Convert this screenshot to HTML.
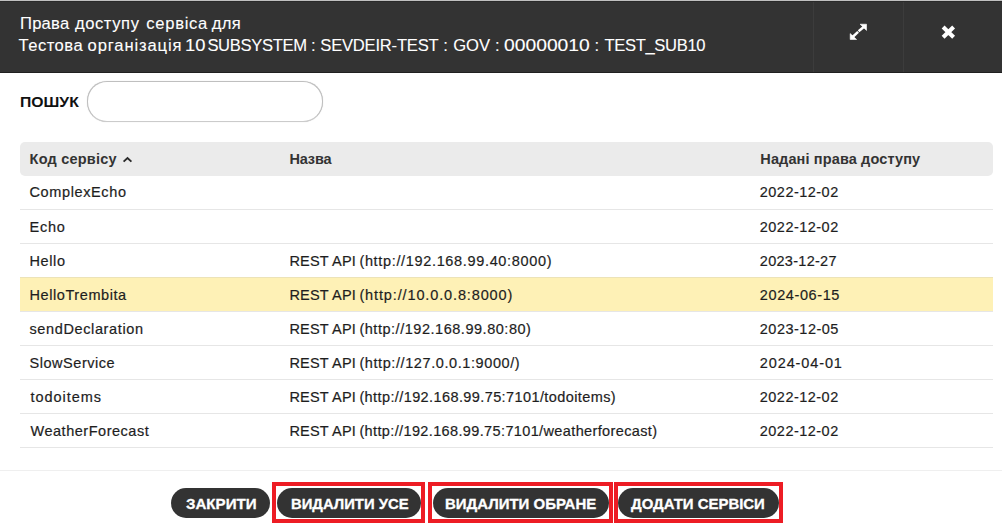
<!DOCTYPE html>
<html><head><meta charset="utf-8">
<style>
*{margin:0;padding:0;box-sizing:border-box}
html,body{width:1002px;height:526px;overflow:hidden;background:#fff}
body{position:relative;font-family:"Liberation Sans",sans-serif;color:#222}
.a{position:absolute;white-space:nowrap}
#topline{left:0;top:0;width:1002px;height:1px;background:#c0c0c0}
#hdr{left:0;top:1px;width:1002px;height:72px;background:#333;border-top:1px solid #2a2a2a;border-bottom:1px solid #202020}
.vd{top:2px;width:1px;height:70px;background:#3c3c3c}
.t1{color:#fff;font-size:16.6px;letter-spacing:0.4px;line-height:20px;-webkit-text-stroke:0.1px #fff}
.lbl{font-weight:bold;font-size:14.5px;color:#111;line-height:20px}
#search{left:87px;top:81px;width:236px;height:41px;border:1px solid #bfbfbf;border-bottom-color:#cbcbcb;box-shadow:0 0 0.8px rgba(0,0,0,0.25);border-radius:20px;background:#fff}
#th{left:20px;top:142px;width:973px;height:34px;background:#ebebeb;border-radius:5px}
.th{font-weight:bold;font-size:14.5px;color:#333;line-height:20px}
.row{left:20px;width:973px;height:34px;border-bottom:1px solid #e6e6e6}
.td{font-size:14.5px;color:#1e1e1e;line-height:20px;-webkit-text-stroke:0.2px #1e1e1e}
#foot{left:0;top:470px;width:1002px;height:1px;background:#efefef}
.btn{top:487.5px;height:30px;border-radius:15px;background:#333}
.bt{font-weight:bold;font-size:14px;color:#fff;line-height:20px;-webkit-text-stroke:0.3px #fff}
.red{top:482px;height:41px;border:4px solid #ed1c24}
</style></head><body>
<div class="a" id="topline"></div>
<div class="a" id="hdr"></div>
<div class="a vd" style="left:813px"></div>
<div class="a vd" style="left:903px"></div>
<div class="a t1" style="left:20px;top:14px;letter-spacing:0.23px">Права</div>
<div class="a t1" style="left:74.9px;top:14px;letter-spacing:0.58px">доступу</div>
<div class="a t1" style="left:146.2px;top:14px;letter-spacing:0.73px">сервіса</div>
<div class="a t1" style="left:211.8px;top:14px;letter-spacing:0.3px">для</div>
<div class="a t1" style="left:18.6px;top:36px;letter-spacing:0.47px">Тестова</div>
<div class="a t1" style="left:87.6px;top:36px;letter-spacing:0.87px">організація</div>
<div class="a t1" style="left:185.2px;top:36px;letter-spacing:0;transform:scaleX(1.106);transform-origin:0 0">10</div>
<div class="a t1" style="left:207.4px;top:36px;letter-spacing:-0.34px">SUBSYSTEM</div>
<div class="a t1" style="left:311px;top:36px;letter-spacing:0px">:</div>
<div class="a t1" style="left:320.3px;top:36px;letter-spacing:-0.22px">SEVDEIR-TEST</div>
<div class="a t1" style="left:443.3px;top:36px;letter-spacing:0px">:</div>
<div class="a t1" style="left:453.2px;top:36px;letter-spacing:-0.05px">GOV</div>
<div class="a t1" style="left:495.1px;top:36px;letter-spacing:0px">:</div>
<div class="a t1" style="left:504.4px;top:36px;letter-spacing:0;transform:scaleX(1.162);transform-origin:0 0">00000010</div>
<div class="a t1" style="left:594.5px;top:36px;letter-spacing:0px">:</div>
<div class="a t1" style="left:604.5px;top:36px;letter-spacing:-0.36px">TEST_SUB10</div>
<!-- expand icon -->
<svg class="a" style="left:846px;top:20px" width="25" height="24" viewBox="846 20 25 24">
  <polygon fill="#fff" stroke="#fff" stroke-width="0.6" stroke-linejoin="round" points="860.1,24.2 866.5,24.2 866.5,30.4"/>
  <polygon fill="#fff" stroke="#fff" stroke-width="0.6" stroke-linejoin="round" points="850.2,33.6 850.2,39.5 856.6,39.5"/>
  <line x1="864" y1="26.8" x2="858.6" y2="31.2" stroke="#fff" stroke-width="2.5"/>
  <line x1="858.1" y1="31.8" x2="852.6" y2="37" stroke="#fff" stroke-width="2.5"/>
</svg>
<!-- close icon -->
<svg class="a" style="left:938px;top:22px" width="22" height="20" viewBox="938 22 22 20">
  <path d="M943.1 27.1 L953.6 37.2 M953.6 27.1 L943.1 37.2" stroke="#fff" stroke-width="4.1" stroke-linecap="butt"/>
</svg>

<div class="a lbl" style="left:19.72px;top:92px;transform:scaleX(1.085);transform-origin:0 0">ПОШУК</div>
<div class="a" id="search"></div>

<div class="a" id="th"></div>
<div class="a th" style="left:29.6px;top:149px;letter-spacing:0.21px">Код сервісу</div>
<svg class="a" style="left:122px;top:156px" width="11" height="7" viewBox="0 0 11 7"><path d="M1.6 5.6 L5.5 2.0 L9.4 5.6" fill="none" stroke="#2a2a2a" stroke-width="1.9"/></svg>
<div class="a th" style="left:289.4px;top:149px;letter-spacing:-0.12px">Назва</div>
<div class="a th" style="left:760.3px;top:149px;letter-spacing:0.13px">Надані права доступу</div>

<div class="a row" style="top:176px"></div>
<div class="a row" style="top:210px"></div>
<div class="a row" style="top:244px"></div>
<div class="a row" style="top:277px;height:35px;background:#fef1b6;border-top:1px solid #ece3b8"></div>
<div class="a row" style="top:312px"></div>
<div class="a row" style="top:346px"></div>
<div class="a row" style="top:380px"></div>
<div class="a row" style="top:414px"></div>

<div class="a td" style="left:29.5px;top:182px;letter-spacing:0.62px">ComplexEcho</div>
<div class="a td" style="left:759.8px;top:182px;letter-spacing:0.47px">2022-12-02</div>
<div class="a td" style="left:29.5px;top:217px;letter-spacing:0.73px">Echo</div>
<div class="a td" style="left:759.8px;top:217px;letter-spacing:0.47px">2022-12-02</div>
<div class="a td" style="left:29.5px;top:251px;letter-spacing:0.62px">Hello</div>
<div class="a td" style="left:289.4px;top:251px;letter-spacing:0.21px">REST API</div><div class="a td" style="left:359.4px;top:251px;letter-spacing:0.66px">(http://192.168.99.40:8000)</div>
<div class="a td" style="left:759.8px;top:251px;letter-spacing:0.28px">2023-12-27</div>
<div class="a td" style="left:29.5px;top:285px;letter-spacing:0.58px">HelloTrembita</div>
<div class="a td" style="left:289.4px;top:285px;letter-spacing:0.21px">REST API</div><div class="a td" style="left:359.4px;top:285px;letter-spacing:0.87px">(http://10.0.0.8:8000)</div>
<div class="a td" style="left:759.8px;top:285px;letter-spacing:0.6px">2024-06-15</div>
<div class="a td" style="left:29.5px;top:319px;letter-spacing:0.62px">sendDeclaration</div>
<div class="a td" style="left:289.4px;top:319px;letter-spacing:0.21px">REST API</div><div class="a td" style="left:359.4px;top:319px;letter-spacing:0.53px">(http://192.168.99.80:80)</div>
<div class="a td" style="left:759.8px;top:319px;letter-spacing:0.49px">2023-12-05</div>
<div class="a td" style="left:29.5px;top:353px;letter-spacing:0.54px">SlowService</div>
<div class="a td" style="left:289.4px;top:353px;letter-spacing:0.21px">REST API</div><div class="a td" style="left:359.4px;top:353px;letter-spacing:0.59px">(http://127.0.0.1:9000/)</div>
<div class="a td" style="left:759.8px;top:353px;letter-spacing:0.88px">2024-04-01</div>
<div class="a td" style="left:30.5px;top:387px;letter-spacing:0.96px">todoitems</div>
<div class="a td" style="left:289.4px;top:387px;letter-spacing:0.21px">REST API</div><div class="a td" style="left:359.4px;top:387px;letter-spacing:0.4px">(http://192.168.99.75:7101/todoitems)</div>
<div class="a td" style="left:759.8px;top:387px;letter-spacing:0.47px">2022-12-02</div>
<div class="a td" style="left:30.5px;top:421px;letter-spacing:0.52px">WeatherForecast</div>
<div class="a td" style="left:289.4px;top:421px;letter-spacing:0.21px">REST API</div><div class="a td" style="left:359.4px;top:421px;letter-spacing:0.37px">(http://192.168.99.75:7101/weatherforecast)</div>
<div class="a td" style="left:759.8px;top:421px;letter-spacing:0.47px">2022-12-02</div>

<div class="a" id="foot"></div>

<div class="a btn" style="left:171px;width:99px"></div>
<div class="a bt" style="left:185.7px;top:494px;transform:scaleX(1.078);transform-origin:0 0">ЗАКРИТИ</div>
<div class="a red" style="left:272px;width:153px"></div>
<div class="a btn" style="left:277px;width:143.5px"></div>
<div class="a bt" style="left:291.44px;top:494px;transform:scaleX(1.059);transform-origin:0 0">ВИДАЛИТИ УСЕ</div>
<div class="a red" style="left:428px;width:185px"></div>
<div class="a btn" style="left:432.5px;width:176.5px"></div>
<div class="a bt" style="left:444.93px;top:494px;transform:scaleX(1.069);transform-origin:0 0">ВИДАЛИТИ ОБРАНЕ</div>
<div class="a red" style="left:614px;width:169px"></div>
<div class="a btn" style="left:618px;width:161px"></div>
<div class="a bt" style="left:631.2px;top:494px;transform:scaleX(1.066);transform-origin:0 0">ДОДАТИ СЕРВІСИ</div>
</body></html>
